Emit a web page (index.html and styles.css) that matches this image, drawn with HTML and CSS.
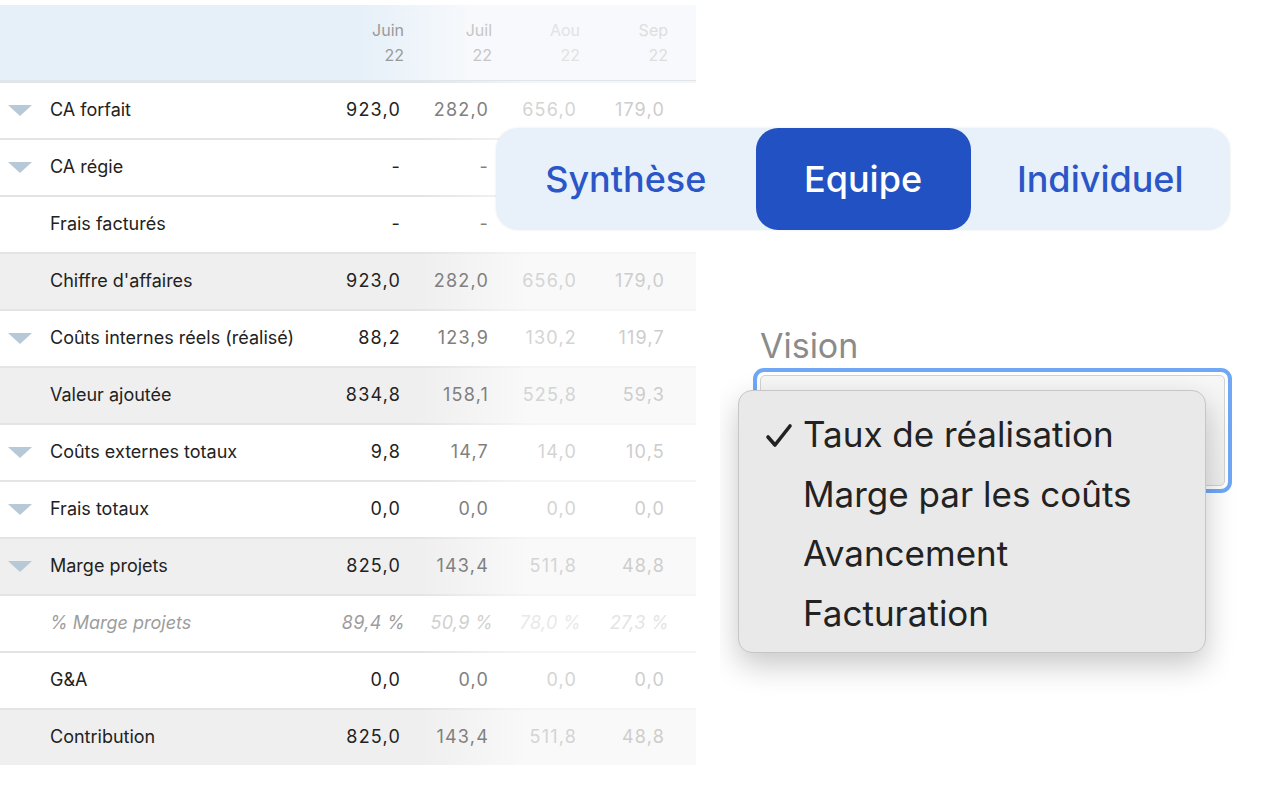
FILE: index.html
```html
<!DOCTYPE html>
<html lang="fr">
<head>
    <meta charset="UTF-8">
    <meta name="viewport" content="width=device-width, initial-scale=1.0">
    <title>Tableau de bord</title>
<link rel="stylesheet" href="styles.css">
</head>
<body>

    <div class="canvas">

        <!-- Table of results -->
        <div class="table">
            <div class="head">
                <div class="cell label"></div>
                <div class="cell c1">Juin<br>22</div>
                <div class="cell c2">Juil<br>22</div>
                <div class="cell c3">Aou<br>22</div>
                <div class="cell c4">Sep<br>22</div>
            </div>

            <div class="row">
                <div class="cell label"><span class="caret"></span>CA forfait</div>
                <div class="cell c1">923,0</div><div class="cell c2">282,0</div><div class="cell c3">656,0</div><div class="cell c4">179,0</div>
            </div>
            <div class="row">
                <div class="cell label"><span class="caret"></span>CA régie</div>
                <div class="cell c1">-</div><div class="cell c2">-</div><div class="cell c3"></div><div class="cell c4"></div>
            </div>
            <div class="row">
                <div class="cell label">Frais facturés</div>
                <div class="cell c1">-</div><div class="cell c2">-</div><div class="cell c3"></div><div class="cell c4"></div>
            </div>
            <div class="row total">
                <div class="cell label">Chiffre d'affaires</div>
                <div class="cell c1">923,0</div><div class="cell c2">282,0</div><div class="cell c3">656,0</div><div class="cell c4">179,0</div>
            </div>
            <div class="row">
                <div class="cell label"><span class="caret"></span>Coûts internes réels (réalisé)</div>
                <div class="cell c1">88,2</div><div class="cell c2">123,9</div><div class="cell c3">130,2</div><div class="cell c4">119,7</div>
            </div>
            <div class="row total">
                <div class="cell label">Valeur ajoutée</div>
                <div class="cell c1">834,8</div><div class="cell c2">158,1</div><div class="cell c3">525,8</div><div class="cell c4">59,3</div>
            </div>
            <div class="row">
                <div class="cell label"><span class="caret"></span>Coûts externes totaux</div>
                <div class="cell c1">9,8</div><div class="cell c2">14,7</div><div class="cell c3">14,0</div><div class="cell c4">10,5</div>
            </div>
            <div class="row">
                <div class="cell label"><span class="caret"></span>Frais totaux</div>
                <div class="cell c1">0,0</div><div class="cell c2">0,0</div><div class="cell c3">0,0</div><div class="cell c4">0,0</div>
            </div>
            <div class="row total">
                <div class="cell label"><span class="caret"></span>Marge projets</div>
                <div class="cell c1">825,0</div><div class="cell c2">143,4</div><div class="cell c3">511,8</div><div class="cell c4">48,8</div>
            </div>
            <div class="row percent">
                <div class="cell label">% Marge projets</div>
                <div class="cell c1">89,4 %</div><div class="cell c2">50,9 %</div><div class="cell c3">78,0 %</div><div class="cell c4">27,3 %</div>
            </div>
            <div class="row">
                <div class="cell label">G&amp;A</div>
                <div class="cell c1">0,0</div><div class="cell c2">0,0</div><div class="cell c3">0,0</div><div class="cell c4">0,0</div>
            </div>
            <div class="row total">
                <div class="cell label">Contribution</div>
                <div class="cell c1">825,0</div><div class="cell c2">143,4</div><div class="cell c3">511,8</div><div class="cell c4">48,8</div>
            </div>
        </div>

        <!-- View switcher -->
        <div class="switcher">
            <button class="tab">Synthèse</button>
            <button class="tab active">Equipe</button>
            <button class="tab">Individuel</button>
        </div>

        <!-- Vision select with open menu -->
        <div class="vision">
            <div class="vision-label">Vision</div>
            <div class="select-ring">
                <div class="select-box"></div>
            </div>
            <ul class="menu">
                <li class="checked">
                    <svg class="check" width="28" height="26" viewBox="0 0 28 26">
                        <path d="M3 14 L10 22 L25 3" fill="none" stroke="#222" stroke-width="3.6" stroke-linecap="round" stroke-linejoin="round"/>
                    </svg>
                    Taux de réalisation
                </li>
                <li>Marge par les coûts</li>
                <li>Avancement</li>
                <li>Facturation</li>
            </ul>
        </div>

    </div>

</body>
</html>
```

FILE: styles.css
```css
* {
    margin: 0;
    padding: 0;
    box-sizing: border-box;
}

body {
    font-family: Inter, "Noto Sans", Arial, sans-serif;
    background-color: #fff;
    color: #222;
}

.canvas {
    position: relative;
    width: 1280px;
    height: 800px;
    overflow: hidden;
    padding-top: 5px;
}

/* Table */
.table {
    width: 696px;
    font-size: 18px;
}

.head, .row {
    display: grid;
    grid-template-columns: 1fr repeat(4, 88px);
    padding-right: 31px;
    align-items: center;
}

.head {
    height: 76px;
    padding-right: 28px;
    font-size: 16px;
    line-height: 25px;
    background: linear-gradient(to right, #e6f0f8 360px, #f7f9fc 470px);
    border-bottom: 1px solid #e1e6ea;
}

.row {
    height: 57px;
    background:
        linear-gradient(to right, #e4e4e4 420px, #f5f5f5 530px) top / 100% 2px no-repeat,
        #fff;
}

.row.total {
    background:
        linear-gradient(to right, #e4e4e4 420px, #f5f5f5 530px) top / 100% 2px no-repeat,
        linear-gradient(to right, #efefef 420px, #f9f9f9 530px);
}

.row:first-of-type {
    background: #fff;
}

.cell {
    text-align: right;
    white-space: nowrap;
}

.row .cell {
    letter-spacing: 1.2px;
}

.row .cell.label {
    letter-spacing: 0;
}

.cell.label {
    text-align: left;
    padding-left: 50px;
    position: relative;
}

.caret {
    position: absolute;
    left: 8px;
    top: 50%;
    margin-top: -5px;
    width: 0;
    height: 0;
    border-left: 12px solid transparent;
    border-right: 12px solid transparent;
    border-top: 11px solid #b7c8d6;
}

.c1 { color: #222; }
.c2 { color: #808080; }
.c3 { color: #d4d4d4; }
.c4 { color: #cdcdcd; }

.head .c1 { color: #9a9a9a; }
.head .c2 { color: #c6c6c6; }
.head .c3 { color: #e2e2e2; }
.head .c4 { color: #dedede; }

.percent .cell {
    font-style: italic;
}

.row.percent .cell {
    letter-spacing: 0.3px;
    margin-right: -4px;
}

.row.percent .cell.label {
    letter-spacing: 0;
    margin-right: 0;
}

.percent .label, .percent .c1 { color: #9d9d9d; }
.percent .c2 { color: #d0d0d0; }
.percent .c3 { color: #e9e9e9; }
.percent .c4 { color: #e4e4e4; }

/* Switcher */
.switcher {
    position: absolute;
    left: 496px;
    top: 128px;
    width: 734px;
    height: 102px;
    display: flex;
    background-color: #e8f1f9;
    border-radius: 22px;
    box-shadow: 0 0 3px rgba(0, 0, 0, 0.08);
}

.tab {
    flex: 1;
    border: none;
    background: none;
    font-family: Inter, "Noto Sans", Arial, sans-serif;
    font-size: 36px;
    font-weight: 500;
    color: #2b56c7;
    border-radius: 22px;
    cursor: pointer;
}

.tab.active {
    flex: 0 0 215px;
    background-color: #2251c4;
    color: #fff;
}

/* Vision */
.vision {
    position: absolute;
    left: 720px;
    top: 310px;
    width: 542px;
    height: 385px;
    overflow: hidden;
    background-color: #fff;
}

.vision-label {
    margin: 16px 0 0 40px;
    font-size: 34px;
    line-height: 40px;
    color: #8b8b8b;
}

.select-ring {
    margin: 2px 0 0 33px;
    width: 479px;
    height: 125px;
    border: 4px solid #70a8f6;
    border-radius: 11px;
    padding: 3px;
}

.select-box {
    height: 100%;
    border: 1px solid #d2d2d2;
    border-radius: 5px;
    background: linear-gradient(#f7f7f7, #efefef);
}

.menu {
    position: absolute;
    left: 18px;
    top: 80px;
    width: 468px;
    height: 263px;
    list-style: none;
    padding: 14px 0 0 64px;
    background-color: #e9e9e9;
    border: 1px solid #c6c6c6;
    border-radius: 14px;
    box-shadow: 0 12px 30px rgba(0, 0, 0, 0.22);
}

.menu li {
    position: relative;
    height: 59.5px;
    line-height: 59.5px;
    font-size: 35px;
    color: #222;
}

.check {
    position: absolute;
    left: -38px;
    top: 18px;
}
```
